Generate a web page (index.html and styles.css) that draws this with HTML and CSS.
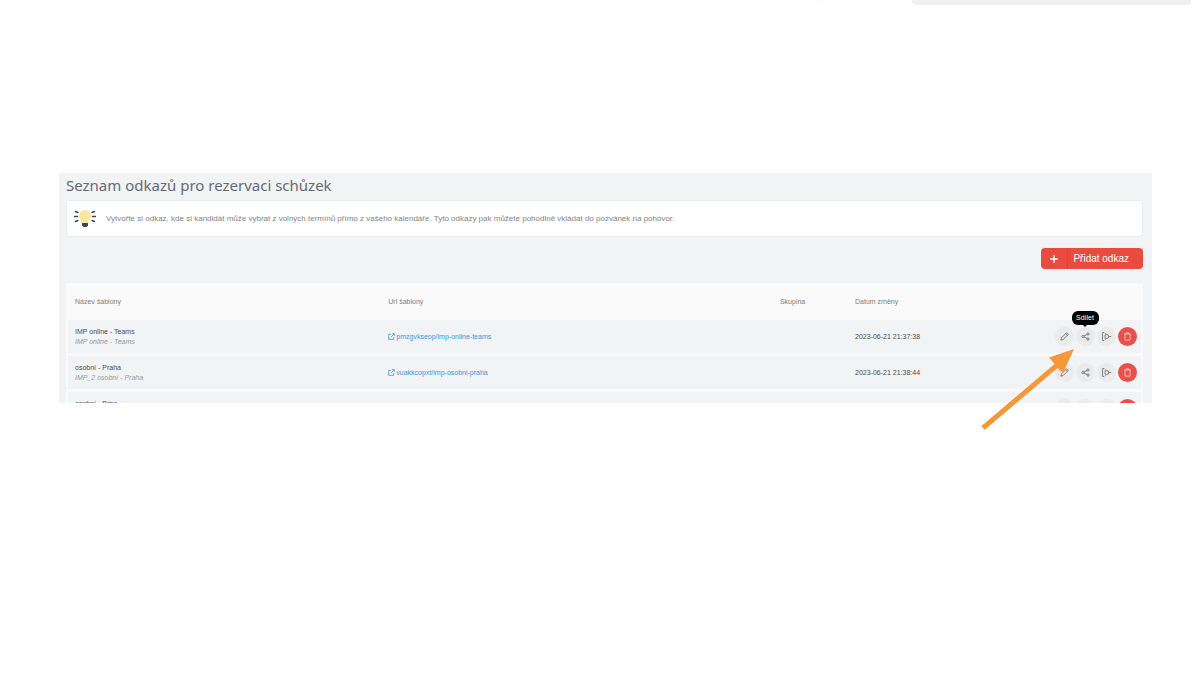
FILE: index.html
```html
<!DOCTYPE html>
<html lang="cs">
<head>
<meta charset="utf-8">
<title>Seznam odkazů pro rezervaci schůzek</title>
<link rel="stylesheet" href="styles.css">
</head>
<body>
<svg class="sprite" aria-hidden="true">
  <symbol id="pencil" viewBox="0 0 16 16"><path d="M1.500 14.500l1-4 8.500-8.500q1-1 2 0l1 1q1 1 0 2L5.500 13.500zM10 3l3 3"/></symbol>
  <symbol id="share" viewBox="0 0 16 16"><circle cx="3.500" cy="8" r="2"/><circle cx="12.500" cy="3.500" r="2"/><circle cx="12.500" cy="12.500" r="2"/><path d="M5.300 7.100l5.400-2.700M5.300 8.900l5.400 2.700"/></symbol>
  <symbol id="embed" viewBox="0 0 16 16"><path d="M4 1H1v14h3M5 3.500h2.500M5 12.500h2.500M12 8h4"/><circle cx="8.500" cy="8" r="3.500"/></symbol>
  <symbol id="trash" viewBox="0 0 16 16"><path d="M2 3.500h12M5.500 3.500v-2h5v2M3.500 3.500v11h9v-11"/></symbol>
  <symbol id="external" viewBox="0 0 16 16"><path d="M7 3H1.500v11.500H13V9M9.500 1.500h5v5M14 2L6.500 9.500"/></symbol>
</svg>
<header class="topbar"><span class="topbar-tick"></span><div class="topbar-field"></div></header>
<div class="stage">
<main class="panel">
  <h1 class="title">Seznam odkazů pro rezervaci schůzek</h1>
  <section class="tip">
    <svg class="bulb" viewBox="0 0 22 20" aria-hidden="true">
      <path class="bulb-glass" d="M11 1a6 6 0 0 0-6 6c0 3.500 3 4 3.200 7h5.600C14 11 17 10.500 17 7a6 6 0 0 0-6-6z"/>
      <path class="bulb-base" d="M8 14h6v2.500L12.500 18h-3L8 16.500z"/>
      <path class="bulb-rays" d="M1.500 2.500l2.500 1M.5 7.500h3M1.500 12.500l2.500-1M20.500 2.500l-2.500 1M21.500 7.500h-3M20.500 12.500l-2.500-1"/>
    </svg>
    <p class="tip-text">Vytvořte si odkaz, kde si kandidát může vybrat z volných termínů přímo z vašeho kalendáře. Tyto odkazy pak můžete pohodlně vkládat do pozvánek na pohovor.</p>
  </section>
  <div class="toolbar">
    <button class="add" type="button"><span class="add-icon"><svg class="plus" viewBox="0 0 8 8" aria-hidden="true"><path d="M4 0v8M0 4h8"/></svg></span><span class="add-label">Přidat odkaz</span></button>
  </div>
  <div class="list">
    <table class="links">
      <colgroup><col class="col-name"><col class="col-url"><col class="col-group"><col class="col-date"><col></colgroup>
      <thead>
        <tr><th scope="col">Název šablony</th><th scope="col">Url šablony</th><th scope="col">Skupina</th><th scope="col">Datum změny</th><td></td></tr>
      </thead>
      <tbody>
        <tr>
          <td>IMP online - Teams<em class="note">IMP online - Teams</em></td>
          <td><a class="url" href="#teams"><svg class="link-icon" aria-hidden="true"><use href="#external"/></svg>pmzgvkseop/imp-online-teams</a></td>
          <td></td>
          <td>2023-06-21 21:37:38</td>
          <td><div class="actions">
            <button class="act" type="button" aria-label="Upravit"><svg class="icon"><use href="#pencil"/></svg></button>
            <button class="act" type="button" aria-label="Sdílet"><svg class="icon"><use href="#share"/></svg><span class="tooltip">Sdílet</span></button>
            <button class="act" type="button" aria-label="Vložit"><svg class="icon"><use href="#embed"/></svg></button>
            <button class="act danger" type="button" aria-label="Smazat"><svg class="icon"><use href="#trash"/></svg></button>
          </div></td>
        </tr>
        <tr>
          <td>osobní - Praha<em class="note">IMP_2 osobní - Praha</em></td>
          <td><a class="url" href="#praha"><svg class="link-icon" aria-hidden="true"><use href="#external"/></svg>vuakkcopxt/imp-osobni-praha</a></td>
          <td></td>
          <td>2023-06-21 21:38:44</td>
          <td><div class="actions">
            <button class="act" type="button" aria-label="Upravit"><svg class="icon"><use href="#pencil"/></svg></button>
            <button class="act" type="button" aria-label="Sdílet"><svg class="icon"><use href="#share"/></svg></button>
            <button class="act" type="button" aria-label="Vložit"><svg class="icon"><use href="#embed"/></svg></button>
            <button class="act danger" type="button" aria-label="Smazat"><svg class="icon"><use href="#trash"/></svg></button>
          </div></td>
        </tr>
        <tr>
          <td>osobní - Brno<em class="note">&nbsp;</em></td>
          <td></td>
          <td></td>
          <td></td>
          <td><div class="actions">
            <button class="act" type="button" aria-label="Upravit"></button>
            <button class="act" type="button" aria-label="Sdílet"></button>
            <button class="act" type="button" aria-label="Vložit"></button>
            <button class="act danger" type="button" aria-label="Smazat"></button>
          </div></td>
        </tr>
      </tbody>
    </table>
  </div>
</main>
<svg class="arrow" viewBox="0 0 94 82" aria-hidden="true"><path d="M.5 78L73.500 16 68 9.500 93 1 82 25 76.500 20 3.500 82z"/></svg>
</div>
</body>
</html>
```
FILE: styles.css
```css
* { box-sizing: border-box; }
body {
  min-height: 100vh;
  margin: 0;
  background: #fff;
  color: #4b4d50;
  font: 7px/10px "Liberation Sans", Arial, sans-serif;
}
button { border: 0; padding: 0; font: inherit; color: inherit; }
.sprite { position: absolute; width: 0; height: 0; }

.topbar {
  display: flex;
  justify-content: flex-end;
  gap: 92px;
  height: 5px;
  padding-right: 9px;
}
.topbar-tick { width: 1px; height: 2px; background: #f0f0f0; }
.topbar-field { width: 23.4%; border-radius: 0 0 4px 4px; background: #f0f0f0; }

.stage {
  position: relative;
  padding: 168px 4% 32px 59px;
}
.panel {
  display: flex;
  flex-direction: column;
  max-height: 230px;
  padding: 0 9px 0 7px;
  background: #f1f3f5;
}
.title {
  flex: none;
  margin: 0;
  padding: 1px 0;
  color: #646a76;
  font: 400 15px/22px "Noto Sans", "Open Sans", sans-serif;
}
.tip {
  flex: none;
  display: flex;
  align-items: center;
  gap: 10px;
  height: 37px;
  margin-top: 3px;
  padding: 0 7px;
  border: 1px solid #e9ebed;
  border-radius: 3px;
  background: #fff;
}
.bulb { width: 22px; height: 20px; }
.bulb-glass { fill: #fbe7a0; }
.bulb-base { fill: #3b4756; }
.bulb-rays { fill: none; stroke: #3b4756; stroke-width: 1.400; stroke-linecap: round; }
.tip-text { margin: 0; color: #858585; font-size: 8px; }

.toolbar { flex: none; display: flex; justify-content: flex-end; padding: 11px 0 14px; }
.add {
  display: flex;
  height: 21px;
  border-radius: 4px;
  background: #e94b3f;
  color: #fff;
  font-size: 10px;
  line-height: 21px;
}
.add-icon {
  display: flex;
  align-items: center;
  justify-content: center;
  width: 27px;
  height: 21px;
  border-right: 1px solid #d84338;
}
.plus { width: 8px; height: 8px; stroke: #fff; stroke-width: 1.300; }
.add-label { padding: 0 14px 0 5px; }

.list { overflow: hidden; background: #fafafa; }
.links {
  width: 100%;
  padding: 0 2px;
  border-collapse: separate;
  border-spacing: 0 3px;
  table-layout: fixed;
}
.col-name { width: 29.200%; }
.col-url { width: 36.500%; }
.col-group { width: 7%; }
.col-date { width: 12%; }
.links th, .links td { height: 33px; padding: 0 4px 0 7px; text-align: left; vertical-align: middle; }
.links thead th, .links thead td { height: 31px; color: #7c7c7c; font-weight: 400; }
.links tbody tr { background: #f1f3f5; }
.note { display: block; color: #999; }
.url { display: flex; align-items: center; gap: 1px; color: #3699dc; text-decoration: none; }
.link-icon { width: 7px; height: 7px; fill: none; stroke: #3699dc; stroke-width: 1.800; }

.actions { display: flex; justify-content: flex-end; gap: 2px; }
.act {
  position: relative;
  display: flex;
  align-items: center;
  justify-content: center;
  width: 19px;
  height: 19px;
  border-radius: 50%;
  background: #ebebec;
}
.icon { width: 9px; height: 9px; fill: none; stroke: #626262; stroke-width: 1.400; }
.danger { background: #e8514a; }
.danger .icon { stroke: #ffd2cf; }
.tooltip {
  position: absolute;
  bottom: 21px;
  left: 50%;
  width: 27px;
  margin-left: -14px;
  border-radius: 6px;
  background: #000;
  color: #fff;
  line-height: 14px;
  text-align: center;
}
.tooltip::after {
  content: "";
  position: absolute;
  top: 100%;
  left: 50%;
  margin-left: -2px;
  border: 2px solid transparent;
  border-top-color: #000;
}
.arrow {
  position: absolute;
  top: 343px;
  right: 125px;
  width: 94px;
  height: 82px;
  fill: #f8963a;
}
```
